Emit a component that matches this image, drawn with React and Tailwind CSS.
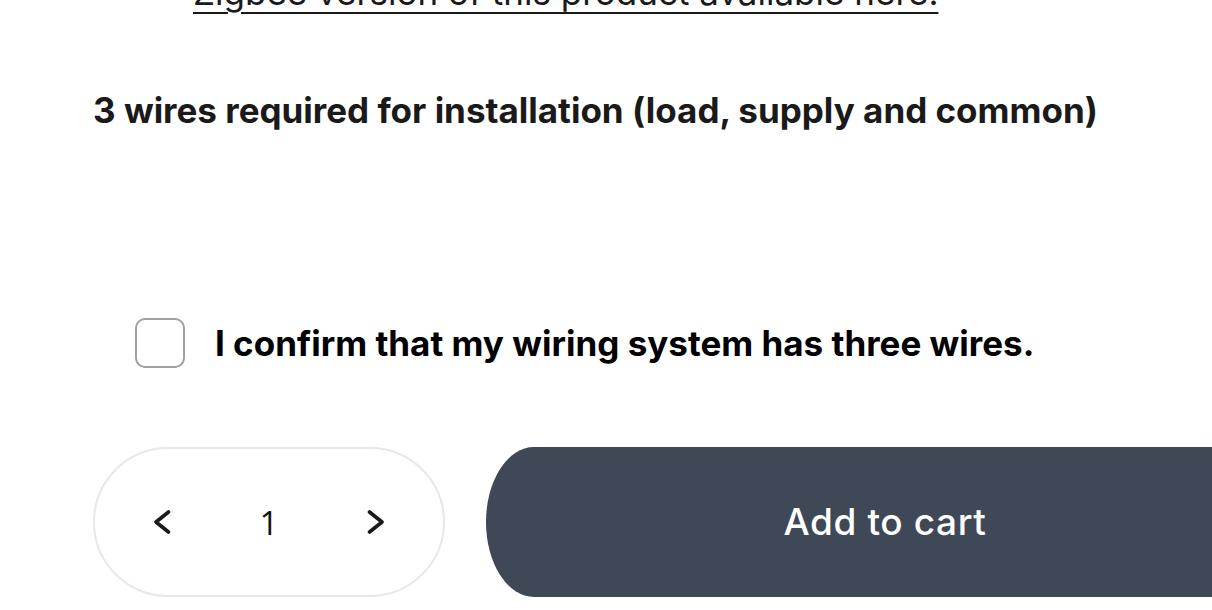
import { useState } from 'react'

function Chevron({ dir }) {
  return (
    <svg width="20" height="24" viewBox="0 0 20 24" fill="none" stroke="#1a1a1a" strokeWidth="3.6" strokeLinecap="round" strokeLinejoin="round">
      {dir === 'left' ? <path d="M16.5 2 L4 12 L16.5 22" /> : <path d="M3.5 2 L16 12 L3.5 22" />}
    </svg>
  )
}

export default function App() {
  const [qty, setQty] = useState(1)
  const [checked, setChecked] = useState(false)

  return (
    <div className="w-[1212px] h-[610px] overflow-hidden bg-white text-[#1a1a1a] font-['Inter',sans-serif]">
      <div className="pl-[93px]">
        {/* Cut-off bullet list */}
        <ul className="list-disc pl-[100px] mt-[-28px] marker:text-gray-300">
          <li className="text-[35px] leading-[40px]">
            <a href="#" className="underline decoration-2 underline-offset-[7px]">Zigbee version of this product available here.</a>
          </li>
        </ul>

        <h3 className="mt-[78px] font-bold text-[35px] leading-[40px]">
          3 wires required for installation (load, supply and common)
        </h3>

        {/* Confirm checkbox */}
        <label className="mt-[188px] ml-[42px] flex items-center gap-[30px] cursor-pointer">
          <span
            onClick={() => setChecked(!checked)}
            className="w-[50px] h-[50px] shrink-0 rounded-[10px] border-2 border-[#a0a0a0] bg-white"
          />
          <span className="font-bold text-[35px] leading-[40px] text-black">
            I confirm that my wiring system has three wires.
          </span>
        </label>

        {/* Quantity + add to cart */}
        <div className="mt-[79px] flex items-center gap-[41px]">
          <div className="w-[352px] h-[150px] shrink-0 rounded-full border-2 border-[#e8e8e8] flex items-center justify-between px-[57px]">
            <button onClick={() => setQty(Math.max(1, qty - 1))} className="flex items-center">
              <Chevron dir="left" />
            </button>
            <span className="font-['Open_Sans',sans-serif] text-[33px] leading-none text-[#111]">{qty}</span>
            <button onClick={() => setQty(qty + 1)} className="flex items-center">
              <Chevron dir="right" />
            </button>
          </div>
          <button className="w-[798px] h-[150px] shrink-0 bg-[#3f4857] rounded-l-[48px_75px] rounded-r-[48px_75px] text-white font-medium text-[37px] tracking-[0.6px]">
            Add to cart
          </button>
        </div>
      </div>
    </div>
  )
}
